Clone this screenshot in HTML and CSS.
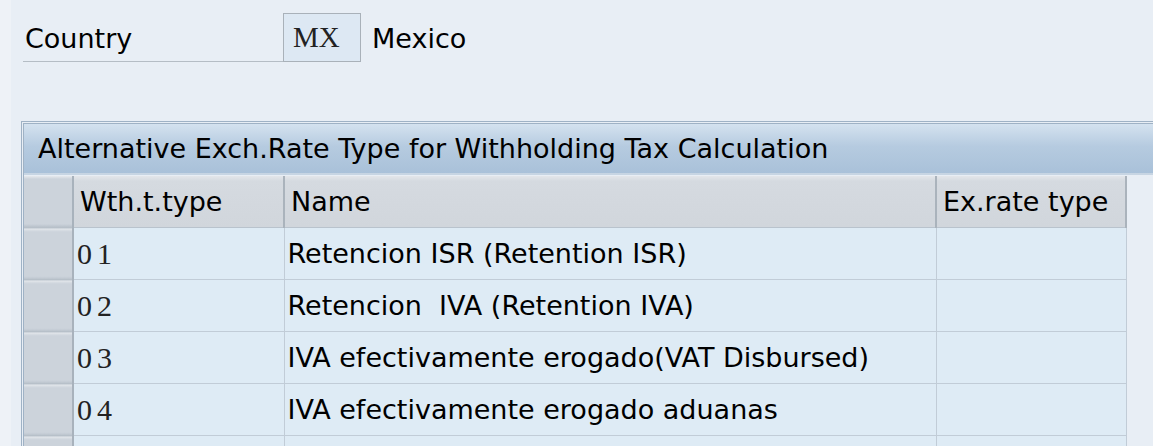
FILE: index.html
```html
<!DOCTYPE html>
<html lang="en">
<head>
    <meta charset="UTF-8">
    <meta name="viewport" content="width=device-width, initial-scale=1.0">
    <title> Alternative Exch.Rate Type </title>
    <link rel="stylesheet" href="styles.css">
</head>
<body>
    <div class="screen">
        <div class="form-row">
            <div class="label">Country</div>
            <div class="field">MX</div>
            <div class="desc">Mexico</div>
        </div>

        <div class="panel">
            <div class="panel-title">Alternative Exch.Rate Type for Withholding Tax Calculation</div>
            <table class="grid">
                <tr class="head">
                    <th class="sel"></th>
                    <th class="col-type">Wth.t.type</th>
                    <th class="col-name">Name</th>
                    <th class="col-rate">Ex.rate type</th>
                </tr>
                <tr>
                    <td class="sel"></td>
                    <td class="code">01</td>
                    <td>Retencion ISR (Retention ISR)</td>
                    <td></td>
                </tr>
                <tr>
                    <td class="sel"></td>
                    <td class="code">02</td>
                    <td>Retencion &nbsp;IVA (Retention IVA)</td>
                    <td></td>
                </tr>
                <tr>
                    <td class="sel"></td>
                    <td class="code">03</td>
                    <td>IVA efectivamente erogado(VAT Disbursed)</td>
                    <td></td>
                </tr>
                <tr>
                    <td class="sel"></td>
                    <td class="code">04</td>
                    <td>IVA efectivamente erogado aduanas</td>
                    <td></td>
                </tr>
                <tr>
                    <td class="sel"></td>
                    <td class="code"></td>
                    <td></td>
                    <td></td>
                </tr>
            </table>
        </div>
    </div>
</body>
</html>
```

FILE: styles.css
```css
html, body {
    margin: 0;
    padding: 0;
    height: 100%;
    overflow: hidden;
}
body {
    font-family: "DejaVu Sans", sans-serif;
    font-size: 27px;
    color: #000;
    background-color: #eef2f7;
}
.screen {
    margin-left: 11px;
    height: 100%;
    overflow: hidden;
    background-color: #e8eef5;
    padding-top: 13px;
    box-sizing: border-box;
}
.form-row {
    display: flex;
    align-items: stretch;
    height: 49px;
    margin-left: 12px;
}
.label {
    width: 260px;
    border-bottom: 1px solid #b5bdc5;
    box-sizing: border-box;
    padding: 10px 0 0 2px;
}
.field {
    width: 78px;
    box-sizing: border-box;
    border: 1px solid #a9b1b9;
    background-color: #dde8f3;
    font-family: "Liberation Serif", serif;
    font-size: 29px;
    padding: 7px 0 0 9px;
    color: #222;
}
.desc {
    padding: 10px 0 0 11px;
}
.panel {
    margin-top: 59px;
    margin-left: 10px;
    border-top: 3px double #9fb2c5;
    border-left: 3px double #9fb2c5;
}
.panel-title {
    height: 49px;
    line-height: 50px;
    padding-left: 14px;
    white-space: nowrap;
    background: linear-gradient(to bottom, #d4e2ef, #b6cbe0 45%, #a9c1d9);
    border-bottom: 2px solid #c7d5e3;
}
.grid {
    border-collapse: collapse;
    margin-top: 1px;
    white-space: nowrap;
}
.grid th {
    height: 51px;
    padding: 0 6px;
    text-align: left;
    font-weight: normal;
    background: linear-gradient(to bottom, #e3e6ea, #d5dae0 10%, #d1d6dc);
    border-right: 2px solid #aab3bc;
    border-bottom: 1px solid #b9c3cd;
}
.grid td {
    height: 51px;
    padding: 0 3px;
    background-color: #deebf5;
    border-right: 1px solid #c1ccd7;
    border-bottom: 1px solid #c1ccd7;
}
.grid .sel {
    width: 48px;
    padding: 0;
    background: linear-gradient(to bottom, #e6e9ed, #ccd3db 6%, #ccd3db 94%, #b9c2cb);
    border-right: 2px solid #a8b2bc;
    border-bottom: 1px solid #b7c0c9;
}
.col-type {
    width: 197px;
}
.col-name {
    width: 638px;
}
.col-rate {
    width: 176px;
}
.code {
    font-family: "Liberation Serif", serif;
    font-size: 30px;
    letter-spacing: 5px;
    color: #222;
}
.grid td.code {
    padding-left: 3px;
}
```
